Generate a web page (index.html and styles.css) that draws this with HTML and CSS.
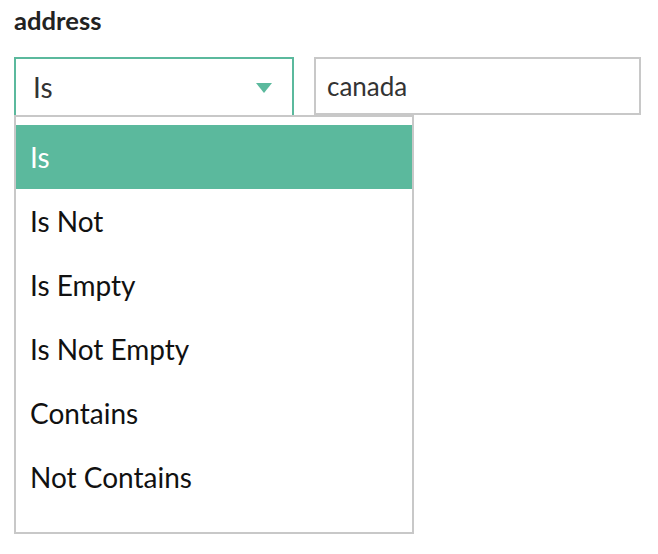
FILE: index.html
```html
<!DOCTYPE html>
<html>
<head>
<meta charset="utf-8">
<link rel="stylesheet" href="styles.css">
</head>
<body>
<div class="field">
  <div class="label">address</div>
  <div class="row">
    <div class="select-col">
      <div class="select">
        <span class="select-value">Is</span>
        <svg class="caret" width="16" height="10" viewBox="0 0 16 10"><polygon points="0,0 16,0 8,10" fill="#5bb99d"/></svg>
      </div>
      <ul class="menu">
        <li class="item active">Is</li>
        <li class="item">Is Not</li>
        <li class="item">Is Empty</li>
        <li class="item">Is Not Empty</li>
        <li class="item">Contains</li>
        <li class="item">Not Contains</li>
      </ul>
    </div>
    <div class="input">canada</div>
  </div>
</div>
</body>
</html>
```

FILE: styles.css
```css
html, body {
  margin: 0;
  padding: 0;
  background: #fff;
}
body {
  font-family: Lato, "Noto Sans", sans-serif;
}
.field {
  padding: 5px 14px 0 14px;
}
.label {
  font-size: 25.6px;
  font-weight: 700;
  color: #222;
  line-height: 30px;
  height: 52px;
}
.row {
  display: flex;
  align-items: flex-start;
  gap: 20px;
}
.select-col {
  flex: 0 0 280px;
  width: 280px;
  display: flex;
  flex-direction: column;
}
.select {
  box-sizing: border-box;
  height: 60px;
  border: 2px solid #5bb99d;
  display: flex;
  align-items: center;
  justify-content: space-between;
  padding: 0 20px 0 17px;
  font-size: 28px;
  color: #333;
}
.select-value {
  line-height: 1;
  padding-bottom: 1px;
}
.caret {
  display: block;
  margin-top: 2px;
}
.menu {
  box-sizing: border-box;
  width: 400px;
  height: 419px;
  margin: -2px 0 0 0;
  padding: 8px 0 0 0;
  list-style: none;
  background: #fff;
  border: 2px solid #c8c8c8;
}
.item {
  height: 64px;
  display: flex;
  align-items: center;
  padding: 0 14px;
  font-size: 28px;
  color: #111;
}
.item.active {
  background: #5bb99d;
  color: #fff;
}
.input {
  box-sizing: border-box;
  width: 327px;
  height: 58px;
  border: 2px solid #c8c8c8;
  display: flex;
  align-items: center;
  padding: 0 11px;
  font-size: 26px;
  color: #333;
}
```
